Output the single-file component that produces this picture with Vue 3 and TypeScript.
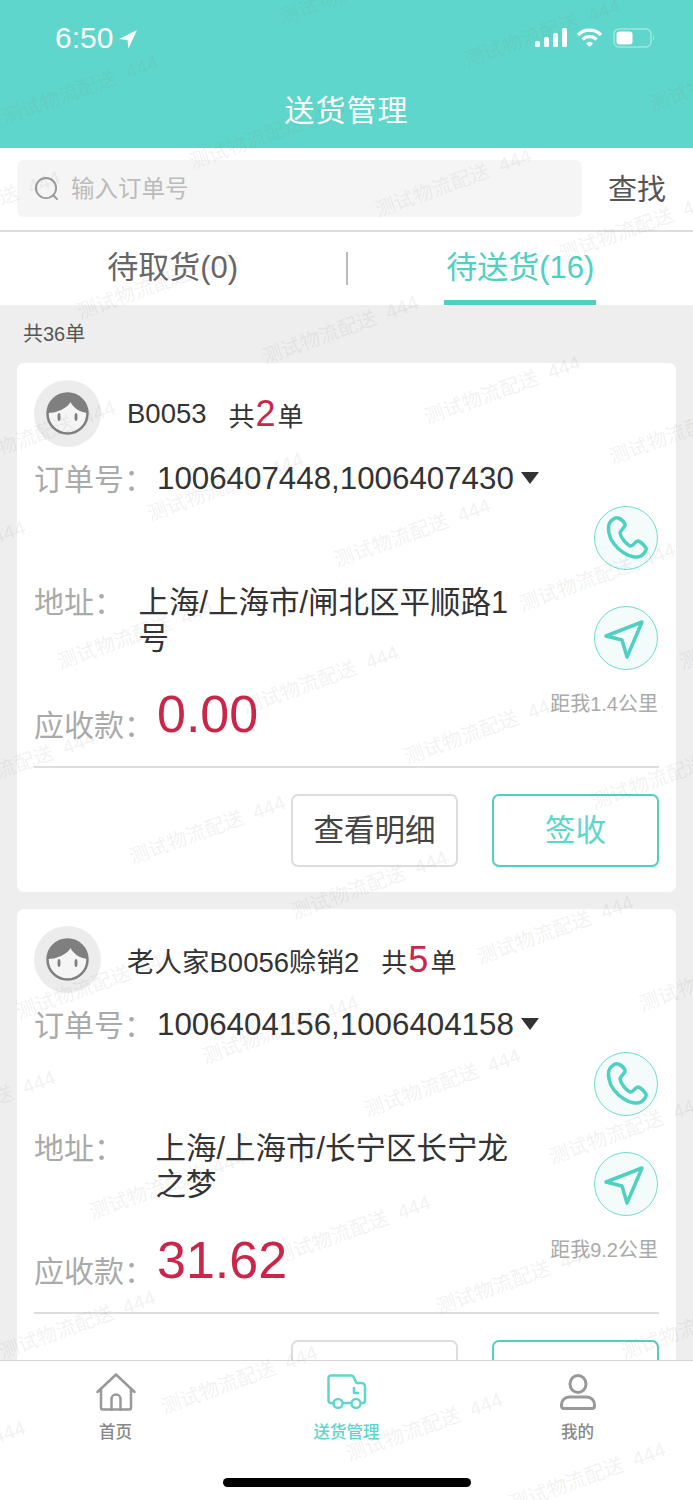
<script setup lang="ts">
interface Order {
  name: string;
  count: number;
  orderNo: string;
  address: string;
  distance: string;
  amount: string;
}

const orders: Order[] = [
  {
    name: 'B0053',
    count: 2,
    orderNo: '1006407448,1006407430',
    address: '上海/上海市/闸北区平顺路1\n号',
    distance: '1.4',
    amount: '0.00',
  },
  {
    name: '老人家B0056赊销2',
    count: 5,
    orderNo: '1006404156,1006404158',
    address: '上海/上海市/长宁区长宁龙\n之梦',
    distance: '9.2',
    amount: '31.62',
  },
];

// 水印位置
const marks: [number, number][] = [
  [3, 125], [190, 170], [376, 218], [560, 262], [280, 25], [465, 68], [650, 112],
  [-95, 240], [78, 320], [263, 365], [425, 425], [610, 465], [-40, 470],
  [148, 522], [335, 568], [520, 612], [-130, 590], [58, 670], [243, 715],
  [405, 765], [592, 810], [-60, 800], [130, 865], [292, 920], [478, 965],
  [640, 1012], [17, 1020], [203, 1065], [365, 1118], [550, 1165], [-100, 1140],
  [90, 1220], [275, 1265], [437, 1315], [622, 1360], [0, 1360], [162, 1415],
  [347, 1462], [510, 1512], [-130, 1490], [680, 670],
];
</script>

<template>
  <div class="page">
    <header class="header">
      <div class="status">
        <div class="time">
          6:50
          <svg class="loc" width="20" height="20" viewBox="0 0 20 20">
            <path d="M19 1 1 10l8.500 1 1 8.500z" fill="#fff" />
          </svg>
        </div>
        <div class="status-icons">
          <svg class="signal" width="32" height="20" viewBox="0 0 32 20" fill="#fff">
            <rect x="0" y="13" width="5" height="6" rx="1.500" />
            <rect x="9" y="9" width="5" height="10" rx="1.500" />
            <rect x="18" y="5" width="5" height="14" rx="1.500" />
            <rect x="27" y="0" width="5" height="19" rx="1.500" />
          </svg>
          <svg width="27" height="20" viewBox="0 0 27 20" fill="none" stroke="#fff" stroke-width="3.400">
            <path d="M2 7a16 16 0 0 1 23 0" />
            <path d="M6.500 11.500a10 10 0 0 1 14 0" />
            <path d="M13.500 19l-3.600-3.800a5 5 0 0 1 7.200 0z" fill="#fff" stroke="none" />
          </svg>
          <svg width="42" height="20" viewBox="0 0 42 20" fill="none">
            <rect x="1" y="1" width="37" height="18" rx="5" stroke="#fff" stroke-opacity=".4" stroke-width="1.500" />
            <rect x="3.500" y="3.500" width="16" height="13" rx="3" fill="#fff" />
            <path d="M40 7c1.500.5 1.500 5.500 0 6z" fill="#fff" fill-opacity=".4" />
          </svg>
        </div>
      </div>
      <div class="title">送货管理</div>
    </header>

    <div class="search">
      <div class="search-box">
        <svg width="25" height="25" viewBox="0 0 26 26" fill="none" stroke="#999" stroke-width="2">
          <circle cx="12.500" cy="12.500" r="10.500" />
          <path d="m20 20 4 4" stroke-linecap="round" />
        </svg>
        <span class="placeholder">输入订单号</span>
      </div>
      <span class="search-btn">查找</span>
    </div>

    <nav class="tabs">
      <div class="tab"><span class="tab-label">待取货(0)</span></div>
      <div class="tab-sep"></div>
      <div class="tab active"><span class="tab-label">待送货(16)</span></div>
    </nav>

    <main class="list">
      <div class="total">共36单</div>
      <section v-for="o in orders" :key="o.name" class="card">
        <div class="card-head">
          <svg class="avatar" width="67" height="67" viewBox="0 0 67 67">
            <circle cx="33.500" cy="33.500" r="33.500" fill="#ececec" />
            <circle cx="33.500" cy="33.500" r="20" fill="#f5f5f5" stroke="#7f7f7f" stroke-width="2.500" />
            <path d="M13.500 33a20 20 0 0 1 40 0c-8-1-14-5-17-11-3 6-13 11-23 11z" fill="#7f7f7f" />
            <ellipse cx="25" cy="37" rx="1.500" ry="4" fill="#7f7f7f" />
            <ellipse cx="42" cy="37" rx="1.500" ry="4" fill="#7f7f7f" />
          </svg>
          <span class="name">{{ o.name }}</span>
          <span class="count">共<b>{{ o.count }}</b>单</span>
        </div>

        <div class="order-row">
          <span class="label">订单号：</span>
          <span class="order-no">{{ o.orderNo }}</span>
          <i class="caret"></i>
        </div>

        <div class="card-body">
          <div class="info">
            <div class="addr-row">
              <span class="label">地址：</span>
              <span class="addr">{{ o.address }}</span>
            </div>
            <div class="amount-row">
              <span class="label">应收款：</span>
              <span class="amount">{{ o.amount }}</span>
            </div>
          </div>
          <div class="side">
            <span class="round-btn">
              <svg width="64" height="64" viewBox="0 0 64 64" fill="none" stroke="#4fd0c0" stroke-width="3.500" stroke-linejoin="round">
                <path d="M17 15C19 13 22 11 24 12 27 13 30 16 31 18 32 21 26 24 26 27 27 32 32 38 36 40 39 41 41 35 44 35 47 36 50 39 52 42 53 44 50 48 47 50 43 52 36 51 30 47 22 42 16 34 15 27 14 22 15 17 17 15Z" />
              </svg>
            </span>
            <span class="round-btn">
              <svg width="64" height="64" viewBox="0 0 64 64" fill="none" stroke="#4fd0c0" stroke-width="3.500" stroke-linejoin="round">
                <path d="M48 16 12 30l16 4 5 17z" />
              </svg>
            </span>
            <span class="distance">距我{{ o.distance }}公里</span>
          </div>
        </div>

        <div class="card-actions">
          <button class="btn">查看明细</button>
          <button class="btn primary">签收</button>
        </div>
      </section>
    </main>

    <footer class="tabbar">
      <div class="tabbar-items">
        <div class="bar-item">
          <svg width="40" height="38" viewBox="0 0 40 38" fill="none" stroke="#999" stroke-width="2.500" stroke-linejoin="round" stroke-linecap="round">
            <path d="M1.500 19 20 1.500 38.500 19" />
            <path d="M5 16v18.500a2 2 0 0 0 2 2h26a2 2 0 0 0 2-2V16" />
            <path d="M15.500 36.500V26a4.500 4.500 0 0 1 9 0v10.500" />
          </svg>
          <span>首页</span>
        </div>
        <div class="bar-item on">
          <svg width="40" height="36" viewBox="0 0 40 36" fill="none" stroke="#5fd6cb" stroke-width="2.500" stroke-linejoin="round">
            <path d="M7.500 29H4a2.500 2.500 0 0 1-2.500-2.500V4A2.500 2.500 0 0 1 4 1.500h20A2.500 2.500 0 0 1 26.500 3l3 6h5a3.500 3.500 0 0 1 3.500 3.500v14a2.500 2.500 0 0 1-2.500 2.500H33" />
            <path d="M15 29h10" />
            <path d="M27 13v6h5" />
            <circle cx="11" cy="29.500" r="4.500" />
            <circle cx="29" cy="29.500" r="4.500" />
          </svg>
          <span>送货管理</span>
        </div>
        <div class="bar-item">
          <svg width="36" height="36" viewBox="0 0 36 36" fill="none" stroke="#999" stroke-width="3">
            <ellipse cx="18" cy="10" rx="8" ry="8.500" />
            <path d="M9 23h18a7.500 7.500 0 0 1 7.500 7.500v1.500a2.500 2.500 0 0 1-2.500 2.500H4A2.500 2.500 0 0 1 1.500 32v-1.500A7.500 7.500 0 0 1 9 23z" />
          </svg>
          <span>我的</span>
        </div>
      </div>
      <div class="home-bar"></div>
    </footer>

    <div class="watermarks">
      <span
        v-for="(m, i) in marks"
        :key="i"
        class="mark"
        :style="{ left: m[0] + 4 + 'px', top: m[1] - 20 + 'px' }"
      >测试物流配送&nbsp;&nbsp;444</span>
    </div>
  </div>
</template>

<style scoped>
.page {
  position: relative;
  display: flex;
  flex-direction: column;
  width: 693px;
  height: 1500px;
  overflow: hidden;
  background: #eee;
  color: #333;
  font-family: "Liberation Sans", "Noto Sans CJK SC", sans-serif;
}

.header {
  height: 148px;
  flex: none;
  background: #5fd6cb;
  color: #fff;
}

.status {
  display: flex;
  justify-content: space-between;
  align-items: center;
  height: 76px;
  padding: 0 38px 0 55px;
}

.time {
  display: flex;
  align-items: center;
  gap: 5px;
  font-size: 30px;
}

.loc {
  margin-top: 1px;
}

.status-icons {
  display: flex;
  align-items: center;
  gap: 10px;
}

.signal {
  margin-right: -1px;
}

.title {
  text-align: center;
  font-size: 30px;
  line-height: 42px;
  margin-top: 14px;
  letter-spacing: 1px;
}

.search {
  display: flex;
  align-items: center;
  flex: none;
  height: 84px;
  padding: 0 27px 1px 17px;
  box-sizing: border-box;
  background: #fff;
  border-bottom: 2px solid #ddd;
}

.search-box {
  display: flex;
  align-items: center;
  gap: 12px;
  width: 565px;
  height: 57px;
  padding-left: 17px;
  box-sizing: border-box;
  background: #f5f5f5;
  border-radius: 7px;
}

.placeholder {
  margin-top: -3px;
  font-size: 23.500px;
  color: #bbb;
}

.search-btn {
  margin-left: auto;
  margin-top: -3px;
  font-size: 29px;
  color: #555;
}

.tabs {
  display: flex;
  align-items: center;
  flex: none;
  height: 73px;
  background: #fff;
}

.tab {
  flex: 1;
  height: 100%;
  display: flex;
  justify-content: center;
  font-size: 31px;
  color: #666;
}

.tab-label {
  padding: 0 2px;
  line-height: 71px;
  height: 73px;
  box-sizing: border-box;
}

.tab.active {
  color: #4fd0c0;
}

.tab.active .tab-label {
  border-bottom: 5px solid #4fd0c0;
}

.tab-sep {
  width: 2px;
  height: 33px;
  background: #bbb;
}

.list {
  flex: 1;
  min-height: 0;
  overflow: hidden;
  padding: 0 17px;
}

.total {
  height: 58px;
  line-height: 58px;
  padding-left: 6px;
  font-size: 20px;
  color: #555;
}

.card {
  height: 529px;
  margin-bottom: 17px;
  padding: 17px 17px 0;
  box-sizing: border-box;
  background: #fff;
  border-radius: 7px;
}

.card-head {
  display: flex;
  align-items: center;
  height: 67px;
}

.name {
  margin-left: 26px;
  font-size: 27.500px;
}

.count {
  margin-left: 22px;
  margin-top: 3px;
  font-size: 26px;
  line-height: 40px;
}

.count b {
  margin: 0 2px 0 1px;
  font-weight: 400;
  font-size: 36px;
  color: #c9264a;
}

.label {
  flex: none;
  font-size: 30px;
  color: #aaa;
}

.order-row {
  display: flex;
  align-items: center;
  height: 44px;
  margin-top: 11px;
}

.order-row .label {
  margin-top: -7px;
}

.order-no {
  margin-left: 3px;
  margin-top: -2px;
  font-size: 31.300px;
}

.caret {
  margin-left: 7px;
  margin-bottom: 4px;
  border-left: 9px solid transparent;
  border-right: 9px solid transparent;
  border-top: 12px solid #333;
}

.card-body {
  display: flex;
  justify-content: space-between;
  height: 260px;
  border-bottom: 2px solid #ddd;
  margin-top: 4px;
}

.info {
  width: 474px;
}

.addr-row {
  display: flex;
  justify-content: space-between;
  height: 136px;
  padding-top: 74px;
  box-sizing: border-box;
}

.addr-row .label {
  line-height: 44px;
  margin-top: 1px;
}

.addr {
  white-space: pre-line;
  font-size: 30.500px;
  line-height: 36px;
  margin-top: 4px;
  color: #333;
}

.amount-row {
  display: flex;
  align-items: center;
  height: 62px;
  margin-top: 50px;
}

.amount {
  margin-left: 3px;
  margin-top: -18px;
  font-size: 52px;
  color: #c9264a;
}

.side {
  display: flex;
  flex-direction: column;
  align-items: flex-end;
  gap: 36px;
  padding-right: 1px;
}

.round-btn {
  display: block;
  width: 64px;
  height: 64px;
  box-sizing: border-box;
  border: 1.500px solid #6fdccf;
  border-radius: 50%;
  background: #f3fcfb;
}

.round-btn svg {
  display: block;
  margin: -1.500px;
}

.distance {
  margin-top: -16px;
  font-size: 20px;
  line-height: 28px;
  color: #aaa;
  white-space: nowrap;
}

.card-actions {
  display: flex;
  justify-content: flex-end;
  gap: 34px;
  margin-top: 26px;
}

.btn {
  width: 167px;
  height: 73px;
  padding: 0 0 6px;
  font-family: inherit;
  font-size: 30.500px;
  color: #444;
  background: #fff;
  border: 2px solid #ddd;
  border-radius: 7px;
}

.btn.primary {
  color: #5fd6cb;
  border-color: #4fd0c0;
}

.tabbar {
  flex: none;
  height: 140px;
  box-sizing: border-box;
  background: #fff;
  border-top: 1.500px solid #d5d5d5;
}

.tabbar-items {
  display: grid;
  grid-template-columns: repeat(3, 1fr);
  height: 116px;
  padding-top: 12px;
  box-sizing: border-box;
}

.bar-item {
  display: flex;
  flex-direction: column;
  align-items: center;
  font-size: 16.500px;
  font-weight: 500;
  color: #888;
}

.bar-item svg {
  height: 38px;
  margin-bottom: 9px;
}

.bar-item span {
  line-height: 24px;
}

.bar-item.on {
  color: #5fd6cb;
}

.home-bar {
  width: 248px;
  height: 9px;
  margin: 1px auto 0;
  border-radius: 5px;
  background: #000;
}

.watermarks {
  position: absolute;
  inset: 0;
  pointer-events: none;
}

.mark {
  position: absolute;
  font-size: 20px;
  line-height: 24px;
  white-space: nowrap;
  color: rgba(120, 120, 120, 0.11);
  transform: rotate(-20deg);
  transform-origin: left bottom;
}
</style>

<style>
html,
body {
  margin: 0;
  background: #fff;
}
</style>
